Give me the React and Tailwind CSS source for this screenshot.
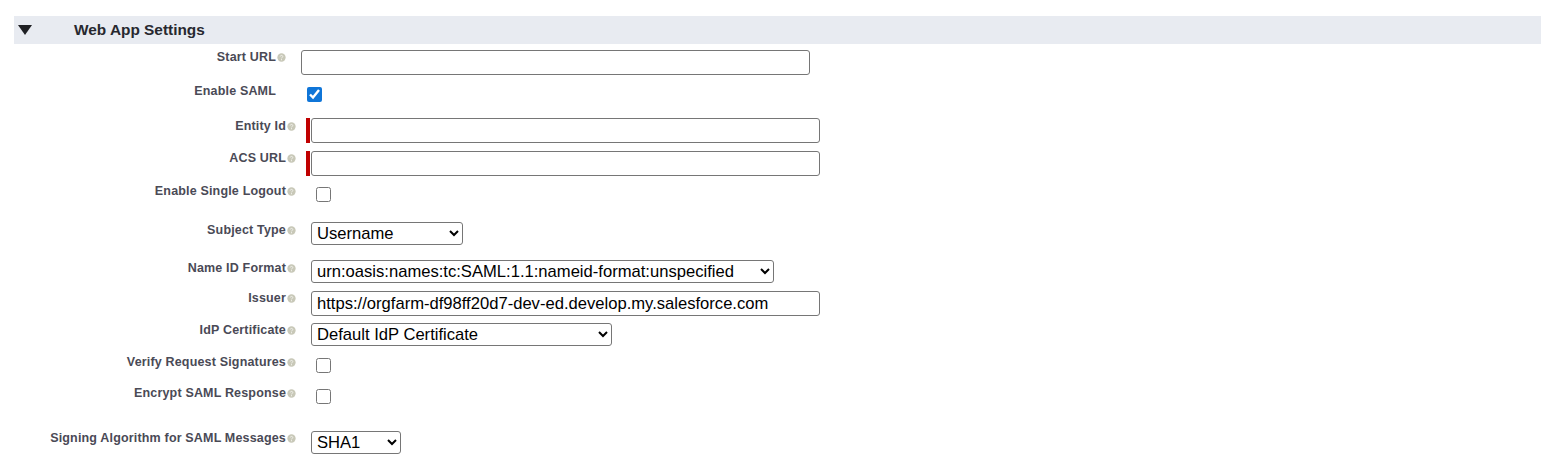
const font = "font-['Liberation_Sans',Arial,sans-serif]";

function Help() {
  return (
    <svg viewBox="0 0 10 10" className="w-[9px] h-[9px] ml-px mt-[3px] shrink-0">
      <circle cx="5" cy="5" r="4.6" fill="#c8c8b8" />
      <path d="M3.6 3.9C3.7 2.3 6.4 2.3 6.4 3.9 6.4 5 5 4.9 5 6" fill="none" stroke="#f4f4ee" strokeWidth="1" />
      <circle cx="5" cy="7.4" r="0.6" fill="#f4f4ee" />
    </svg>
  );
}

function Row({ label, help = true, h, w = "w-[296px]", gap = "ml-[15px]", labelTop = "", children }) {
  return (
    <div className={`flex items-start ${h}`}>
      <div className={`flex justify-end shrink-0 ${w} ${labelTop}`}>
        <span className="text-[12.5px] leading-[14px] tracking-[0.17px] font-bold text-[#4a4a56] whitespace-nowrap">{label}</span>
        {help && <Help />}
      </div>
      <div className={`flex items-start ${gap}`}>{children}</div>
    </div>
  );
}

function Required() {
  return <span className="w-[4px] h-[25px] bg-[#c00000] mr-px shrink-0" />;
}

const inputCls = "h-[25px] bg-white border border-[#767676] rounded-[3px] px-[5px] text-[16.6px] text-black outline-none";
const selectCls = "h-[23px] bg-white border border-[#767676] rounded-[3px] pl-[1px] text-[16.6px] text-black outline-none";
const checkCls = "w-[15px] h-[15px] m-0 mt-[3px] accent-[#0f75d8]";

export default function App() {
  return (
    <div className={`${font} w-[1542px] h-[468px] bg-white overflow-hidden pt-[16px]`}>
      <div className="ml-[14px] w-[1527px] h-[28px] bg-[#e8ebf1] flex items-center">
        <svg viewBox="0 0 14 10" className="w-[14px] h-[10px] ml-[4px] mt-[-1px] shrink-0">
          <path d="M0 0H14L7 10Z" fill="#1f2024" />
        </svg>
        <h3 className="ml-[42px] text-[15.4px] font-bold text-[#27282f] leading-none">Web App Settings</h3>
      </div>
      <div className="pt-[6px]">
        <Row label="Start URL" h="h-[34px]" w="w-[286px]">
          <input className={`${inputCls} w-[509px]`} />
        </Row>
        <Row label="Enable SAML" help={false} h="h-[34px]" w="w-[276px]" gap="ml-[31px]">
          <input type="checkbox" defaultChecked className={checkCls} />
        </Row>
        <Row label="Entity Id" h="h-[33px]" gap="ml-[10px]" labelTop="pt-px">
          <Required />
          <input className={`${inputCls} w-[509px]`} />
        </Row>
        <Row label="ACS URL" h="h-[33px]" gap="ml-[10px]">
          <Required />
          <input className={`${inputCls} w-[509px]`} />
        </Row>
        <Row label="Enable Single Logout" h="h-[38px]" gap="ml-[20px]">
          <input type="checkbox" className={checkCls} />
        </Row>
        <Row label="Subject Type" h="h-[38px]" labelTop="pt-px">
          <select className={`${selectCls} w-[152px]`} defaultValue="Username">
            <option>Username</option>
          </select>
        </Row>
        <Row label="Name ID Format" h="h-[31px]" labelTop="pt-px">
          <select className={`${selectCls} w-[463px]`}>
            <option>urn:oasis:names:tc:SAML:1.1:nameid-format:unspecified</option>
          </select>
        </Row>
        <Row label="Issuer" h="h-[32px]">
          <input
            className={`${inputCls} w-[509px]`}
            defaultValue="https://orgfarm-df98ff20d7-dev-ed.develop.my.salesforce.com"
          />
        </Row>
        <Row label="IdP Certificate" h="h-[32px]">
          <select className={`${selectCls} w-[301px]`}>
            <option>Default IdP Certificate</option>
          </select>
        </Row>
        <Row label="Verify Request Signatures" h="h-[31px]" gap="ml-[20px]">
          <input type="checkbox" className={checkCls} />
        </Row>
        <Row label="Encrypt SAML Response" h="h-[45px]" gap="ml-[20px]">
          <input type="checkbox" className={checkCls} />
        </Row>
        <Row label="Signing Algorithm for SAML Messages" h="h-[23px]">
          <select className={`${selectCls} w-[90px]`}>
            <option>SHA1</option>
          </select>
        </Row>
      </div>
    </div>
  );
}
